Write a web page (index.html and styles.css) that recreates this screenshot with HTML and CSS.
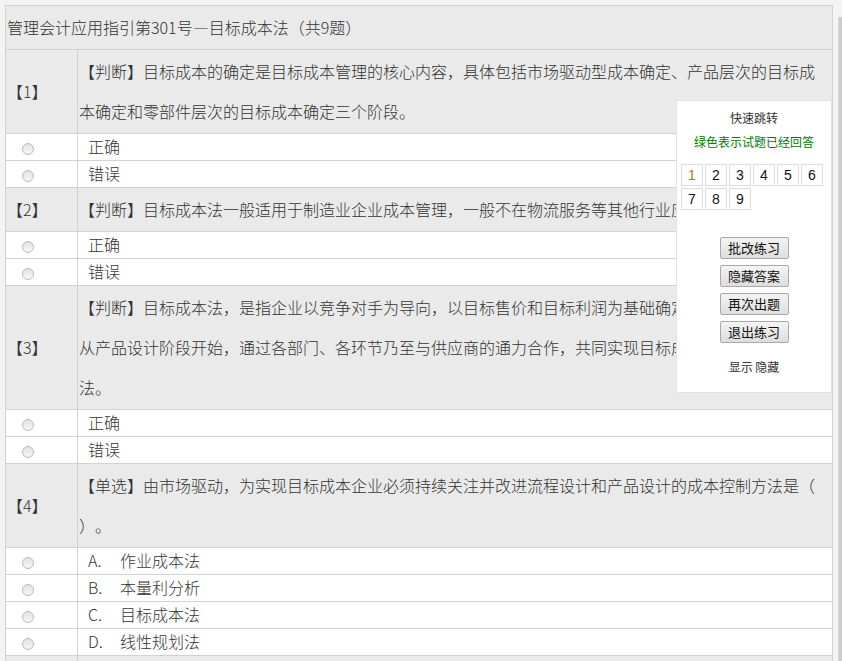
FILE: index.html
```html
<!DOCTYPE html>
<html lang="zh-CN">
<head>
<meta charset="UTF-8" />
<title>管理会计应用指引第301号—目标成本法</title>
<link rel="stylesheet" href="styles.css">
</head>
<body>
<table class="paper">
  <colgroup><col class="c-no"><col></colgroup>
  <tr class="caption">
    <td colspan="2">管理会计应用指引第301号—目标成本法（共9题）</td>
  </tr>

  <tr class="ques" id="q1">
    <td class="no">【1】</td>
    <td class="txt">【判断】目标成本的确定是目标成本管理的核心内容，具体包括市场驱动型成本确定、产品层次的目标成本确定和零部件层次的目标成本确定三个阶段。</td>
  </tr>
  <tr class="opt"><td class="no"><input type="radio" name="q1"></td><td class="txt">正确</td></tr>
  <tr class="opt"><td class="no"><input type="radio" name="q1"></td><td class="txt">错误</td></tr>

  <tr class="ques" id="q2">
    <td class="no">【2】</td>
    <td class="txt">【判断】目标成本法一般适用于制造业企业成本管理，一般不在物流服务等其他行业应用。</td>
  </tr>
  <tr class="opt"><td class="no"><input type="radio" name="q2"></td><td class="txt">正确</td></tr>
  <tr class="opt"><td class="no"><input type="radio" name="q2"></td><td class="txt">错误</td></tr>

  <tr class="ques" id="q3">
    <td class="no">【3】</td>
    <td class="txt">【判断】目标成本法，是指企业以竞争对手为导向，以目标售价和目标利润为基础确定产品的目标成本，从产品设计阶段开始，通过各部门、各环节乃至与供应商的通力合作，共同实现目标成本的成本管理方法。</td>
  </tr>
  <tr class="opt"><td class="no"><input type="radio" name="q3"></td><td class="txt">正确</td></tr>
  <tr class="opt"><td class="no"><input type="radio" name="q3"></td><td class="txt">错误</td></tr>

  <tr class="ques" id="q4">
    <td class="no">【4】</td>
    <td class="txt">【单选】由市场驱动，为实现目标成本企业必须持续关注并改进流程设计和产品设计的成本控制方法是（ ）。</td>
  </tr>
  <tr class="opt"><td class="no"><input type="radio" name="q4"></td><td class="txt"><span class="key">A.</span>作业成本法</td></tr>
  <tr class="opt"><td class="no"><input type="radio" name="q4"></td><td class="txt"><span class="key">B.</span>本量利分析</td></tr>
  <tr class="opt"><td class="no"><input type="radio" name="q4"></td><td class="txt"><span class="key">C.</span>目标成本法</td></tr>
  <tr class="opt"><td class="no"><input type="radio" name="q4"></td><td class="txt"><span class="key">D.</span>线性规划法</td></tr>

  <tr class="ques" id="q5">
    <td class="no">【5】</td>
    <td class="txt">【单选】企业应用目标成本法，一般需要成立由（ ）等部门组成的跨部门团队。</td>
  </tr>
  <tr class="opt"><td class="no"><input type="radio" name="q5"></td><td class="txt"><span class="key">A.</span>研究与开发、工程、供应、生产、营销、财务</td></tr>
  <tr class="opt"><td class="no"><input type="radio" name="q5"></td><td class="txt"><span class="key">B.</span>研究与开发、财务</td></tr>
  <tr class="opt"><td class="no"><input type="radio" name="q5"></td><td class="txt"><span class="key">C.</span>生产、营销</td></tr>
  <tr class="opt"><td class="no"><input type="radio" name="q5"></td><td class="txt"><span class="key">D.</span>供应、财务</td></tr>
</table>

<div class="jump">
  <div>快速跳转</div>
  <div class="tip">绿色表示试题已经回答</div>
  <div class="nums">
    <a href="#q1" class="now">1</a>
    <a href="#q2">2</a>
    <a href="#q3">3</a>
    <a href="#q4">4</a>
    <a href="#q5">5</a>
    <a href="#">6</a>
    <a href="#">7</a>
    <a href="#">8</a>
    <a href="#">9</a>
  </div>
  <div class="tools">
    <button>批改练习</button>
    <button>隐藏答案</button>
    <button>再次出题</button>
    <button>退出练习</button>
  </div>
  <div class="toggle"><a href="#">显示</a> <a href="#">隐藏</a></div>
</div>

<div class="vbar"></div>
</body>
</html>
```

FILE: styles.css
```css
* {
  box-sizing: border-box;
}
html {
  background: #f3f3f3;
}
body {
  margin: 5px;
  font-family: "Noto Sans CJK SC", sans-serif;
  font-size: 16px;
  font-weight: 300;
  color: #333;
  text-spacing-trim: space-all;
}
.paper {
  width: 99.5%;
  border-collapse: collapse;
  table-layout: fixed;
}
.paper .c-no {
  width: 72px;
}
.paper td {
  border: 1px solid #d2d2d2;
  padding: 1px 1px 2px;
  line-height: 40px;
  vertical-align: middle;
}
.caption td,
.ques td {
  background: #eaeaea;
}
.opt td {
  background: #fff;
  line-height: 23px;
}
.opt .no {
  padding-left: 16px;
}
.opt .txt {
  padding-left: 10px;
}
.key {
  display: inline-block;
  width: 32px;
}
.opt input {
  appearance: none;
  -webkit-appearance: none;
  width: 12px;
  height: 12px;
  margin: 0;
  border: 1px solid #bcbcbc;
  border-radius: 50%;
  background: linear-gradient(#e2e2e2, #f7f7f7);
  vertical-align: middle;
}

/* floating jump panel */
.jump {
  position: fixed;
  top: 100px;
  left: 676px;
  width: 156px;
  padding: 5px 4px 13px;
  background: #fff;
  border: 1px solid #e2e2e2;
  font-size: 12px;
  font-weight: 400;
  line-height: 24px;
  text-align: center;
}
.jump a {
  color: #333;
  text-decoration: none;
}
.jump .tip {
  color: #008000;
}
.nums {
  display: grid;
  grid-template-columns: repeat(6, 22px);
  gap: 2px;
  margin-top: 10px;
}
.nums a {
  height: 22px;
  border: 1px solid #dcdcdc;
  font: 14px/20px "Liberation Sans", Arial, sans-serif;
  color: #111;
}
.nums a.now {
  color: #b87800;
}
.tools {
  display: flex;
  flex-direction: column;
  align-items: center;
  gap: 6px;
  margin-top: 27px;
}
.tools button {
  width: 69px;
  height: 22px;
  padding: 0;
  font: 13px/20px "Noto Sans CJK SC", sans-serif;
  color: #111;
  border: 1px solid #a9a9a9;
  border-radius: 2px;
  background: linear-gradient(#f4f4f4, #dedede);
}
.toggle {
  margin-top: 12px;
}
.vbar {
  position: fixed;
  top: 17px;
  right: 0;
  bottom: 0;
  width: 4px;
  background: #cdcdcd;
  border-left: 1px solid #dadada;
}
```
